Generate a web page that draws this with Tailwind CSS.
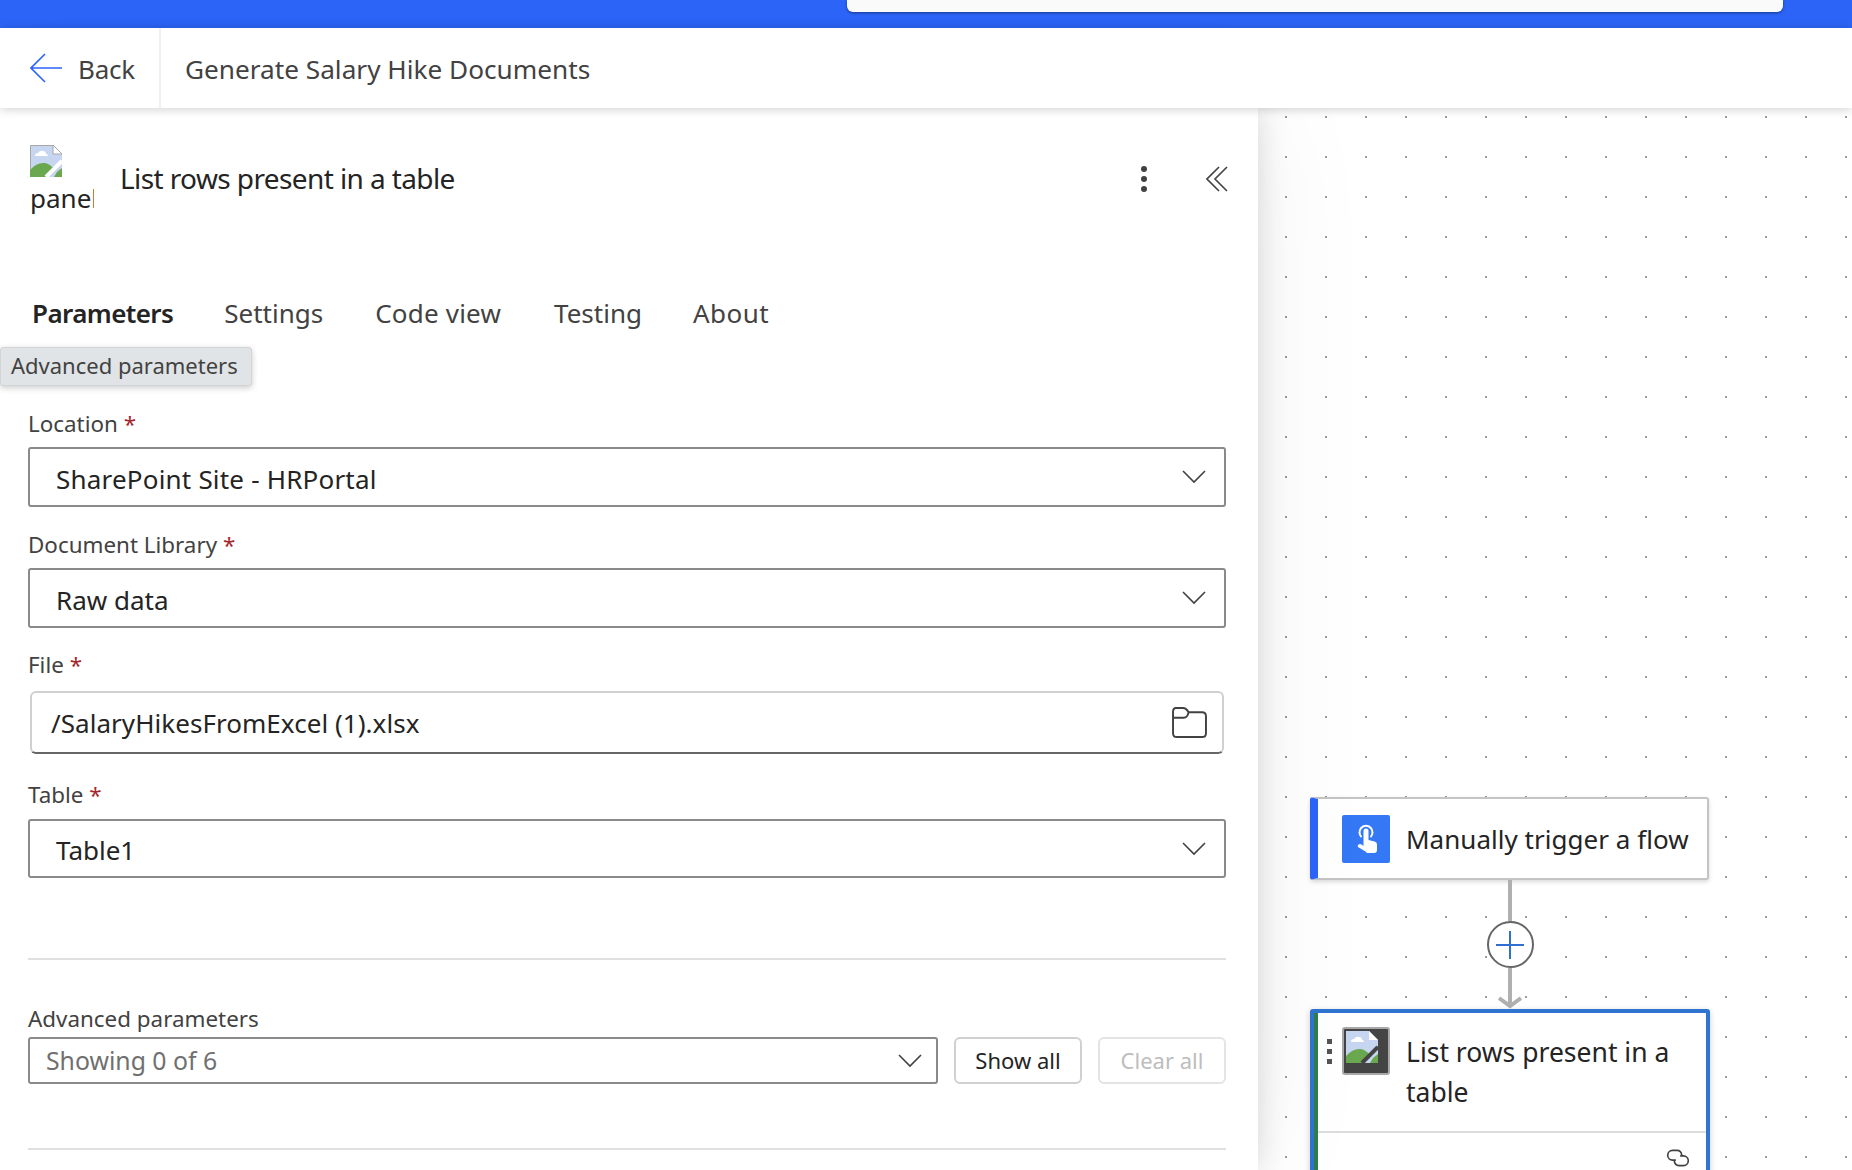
<!doctype html>
<html>
<head>
<meta charset="utf-8">
<script src="https://cdn.jsdelivr.net/npm/@tailwindcss/browser@4"></script>
</head>
<body class="w-[1852px] h-[1170px] overflow-hidden bg-white text-[#242424] font-['Noto_Sans',sans-serif]">
<div class="h-[28px] bg-[#2b64f7] flex shrink-0">
  <div class="ml-[847px] w-[936px] h-[12px] bg-[#fafafa] rounded-b-[6px] shadow-[0_1px_3px_rgba(0,0,0,0.45)]"></div>
</div>
<header class="relative z-20 h-[80px] bg-white flex items-center shadow-[0_1px_10px_rgba(0,0,0,0.2)]">
  <div class="w-[161px] h-full border-r-2 border-[#f0f0f0] flex items-center pl-[30px] gap-[16px]">
    <svg class="w-[32px] h-[30px]" viewBox="0 0 32 30" fill="none" stroke="#2b64f7" stroke-width="1.6"><path d="M32 15H1M15 1 1 15l14 14"/></svg>
    <span class="text-[26px] tracking-[-0.2px] text-[#424242] pt-[3px]">Back</span>
  </div>
  <h1 class="ml-[24px] pt-[2px] text-[26.2px] text-[#424242] leading-none">Generate Salary Hike Documents</h1>
</header>
<main class="flex h-[1062px]">
  <section class="relative z-10 w-[1258px] shrink-0 bg-white shadow-[0_0_30px_rgba(0,0,0,0.14),0_0_120px_rgba(0,0,0,0.06)] pl-[28px] pr-[32px]">
    <div class="flex items-center h-[88px] mt-[27px] -mr-[4px]">
      <div class="w-[64px] h-[74px] overflow-hidden ml-[2px] pt-[3px] shrink-0 text-[26px] leading-none text-[#242424]">
        <svg class="w-[32px] h-[32px] block" viewBox="0 0 32 32"><path d="M0 0h23l9 9v23H0z" fill="#c6d6f0"/><path d="M.5 32V.5H23" fill="none" stroke="#a8a8a8"/><path d="M23 0l9 9h-9z" fill="#fff" stroke="#a8a8a8"/><path d="M5 11q0-3 3-3 2-3 5-2 3 0 3 3 2 0 2 2z" fill="#fff"/><path d="M0 32v-7q7-8 15-7 5 1 9 6l-8 8z" fill="#6aa84f"/><path d="M27 27l5-4v9h-8z" fill="#6aa84f"/><path d="M32 16 16 32" stroke="#fff" stroke-width="4"/></svg>
        <span class="block mt-[8px]">panel</span>
      </div>
      <h2 class="ml-[26px] mb-[3px] text-[28px] tracking-[-0.6px] text-[#242424] leading-none">List rows present in a table</h2>
      <div class="ml-auto flex items-center">
        <svg class="w-[10px] h-[26px] mr-[57px]" viewBox="0 0 10 26" fill="#424242"><circle cx="5" cy="3" r="3"/><circle cx="5" cy="13" r="3"/><circle cx="5" cy="23" r="3"/></svg>
        <svg class="w-[22px] h-[26px] mr-[2px]" viewBox="0 0 22 26" fill="none" stroke="#424242" stroke-width="1.6"><path d="M13 1 1 13l12 12M21 1 9 13l12 12"/></svg>
      </div>
    </div>
    <nav class="flex gap-[51px] mt-[77px] ml-[4px] text-[26px] leading-none text-[#424242]">
      <span class="font-semibold tracking-[-0.6px] text-[#242424]">Parameters</span><span>Settings</span><span class="ml-[1px] tracking-[0.2px]">Code view</span><span class="ml-[2px]">Testing</span><span class="tracking-[0.5px]">About</span>
    </nav>
    <div class="absolute left-0 top-[239px] w-[252px] h-[39px] rounded-[3px] bg-[#e1e4e6] border border-[#d2d4d6] shadow-[0_2px_6px_rgba(0,0,0,0.2)] flex items-center pl-[10px] pb-[3px] text-[22px] leading-none text-[#424242]">Advanced parameters</div>
    <form class="mt-[87px] flex flex-col">
      <label class="text-[22.4px] leading-none text-[#424242] h-[34px]">Location <span class="text-[#a4262c]">*</span></label>
      <div class="h-[60px] border-2 border-[#8a8a8a] rounded-[3px] flex items-center justify-between pl-[26px] pr-[18px] text-[26px] text-[#242424]">
        <span class="pt-[4px] tracking-[0.2px]">SharePoint Site - HRPortal</span>
        <svg class="w-[24px] h-[14px]" viewBox="0 0 24 14" fill="none" stroke="#424242" stroke-width="1.6"><path d="m1 1 11 11L23 1"/></svg>
      </div>
      <label class="mt-[27px] text-[22.4px] leading-none text-[#424242] h-[34px]">Document Library <span class="text-[#a4262c]">*</span></label>
      <div class="h-[60px] border-2 border-[#8a8a8a] rounded-[3px] flex items-center justify-between pl-[26px] pr-[18px] text-[26px] text-[#242424]">
        <span class="pt-[4px]">Raw data</span>
        <svg class="w-[24px] h-[14px]" viewBox="0 0 24 14" fill="none" stroke="#424242" stroke-width="1.6"><path d="m1 1 11 11L23 1"/></svg>
      </div>
      <label class="mt-[26px] text-[22.4px] leading-none text-[#424242] h-[37px]">File <span class="text-[#a4262c]">*</span></label>
      <div class="mx-[2px] h-[63px] border-2 border-[#d0d0d0] border-b-[#666666] rounded-[6px] flex items-center justify-between pl-[19px] pr-[15px] text-[26px] text-[#242424]">
        <span class="pt-[2px] tracking-[0.05px]">/SalaryHikesFromExcel (1).xlsx</span>
        <svg class="w-[35px] h-[31px]" viewBox="0 0 36 32" fill="none" stroke="#424242" stroke-width="2"><path d="M4 1h7q4 0 6 4.500H31q4 0 4 4V27q0 4-4 4H5q-4 0-4-4V5q0-4 3-4zM1 11h11q4 0 5-5.500"/></svg>
      </div>
      <label class="mt-[30px] text-[22.4px] leading-none text-[#424242] h-[35px]">Table <span class="text-[#a4262c]">*</span></label>
      <div class="h-[59px] border-2 border-[#8a8a8a] rounded-[3px] flex items-center justify-between pl-[26px] pr-[18px] text-[26px] text-[#242424]">
        <span class="pt-[4px]">Table1</span>
        <svg class="w-[24px] h-[14px]" viewBox="0 0 24 14" fill="none" stroke="#424242" stroke-width="1.6"><path d="m1 1 11 11L23 1"/></svg>
      </div>
      <hr class="mt-[80px] border-0 h-[2px] bg-[#e0e0e0]">
      <label class="mt-[48px] text-[22.4px] leading-none text-[#424242] h-[29px]">Advanced parameters</label>
      <div class="flex gap-[16px] h-[47px]">
        <div class="w-[910px] border-2 border-[#8a8a8a] rounded-[3px] flex items-center justify-between pl-[16px] pr-[14px] text-[24.8px] text-[#707070]">
          <span>Showing 0 of 6</span>
          <svg class="w-[24px] h-[14px]" viewBox="0 0 24 14" fill="none" stroke="#424242" stroke-width="1.6"><path d="m1 1 11 11L23 1"/></svg>
        </div>
        <div class="w-[128px] border-2 border-[#d0d0d0] rounded-[6px] flex items-center justify-center text-[22px] text-[#242424]">Show all</div>
        <div class="w-[128px] border-2 border-[#e4e4e4] rounded-[6px] flex items-center justify-center text-[22px] text-[#bdbdbd]">Clear all</div>
      </div>
      <hr class="mt-[64px] border-0 h-[2px] bg-[#e0e0e0]">
    </form>
  </section>
  <section class="relative flex-1 bg-white bg-[radial-gradient(circle,#999999_1.2px,transparent_1.4px)] bg-size-[40px_40px] bg-position-[8px_-11px] overflow-hidden">
    <div class="absolute left-[52px] top-[689px] w-[400px] flex flex-col items-center">
      <div class="w-[399px] h-[83px] self-start bg-white rounded-[3px] border-2 border-[#c4c4c4] border-l-[8px] border-l-[#2b64f7] shadow-[0_2px_4px_rgba(0,0,0,0.15)] flex items-center pl-[24px] gap-[16px]">
        <svg class="w-[48px] h-[48px]" viewBox="0 0 48 48"><rect width="48" height="48" rx="2" fill="#3478f6"/><path d="M21.500 16a2.500 2.500 0 0 1 5 0v9l6 1.500q2.500.6 2.500 3V35q0 3-3 3h-6q-1.500 0-2.500-1.500L16 32q-1-1.500.5-2.500t3 0l2 1.500z" fill="#fff"/><path d="M19.500 22a6.500 6.500 0 1 1 9 0" fill="none" stroke="#fff" stroke-width="2"/></svg>
        <span class="text-[26px] pt-[2px] tracking-[0.03px] text-[#242424]">Manually trigger a flow</span>
      </div>
      <div class="w-[4px] h-[41px] bg-[#b0b0b0]"></div>
      <div class="w-[47px] h-[47px] shrink-0 rounded-full border-2 border-[#666666] bg-white flex items-center justify-center">
        <svg class="w-[28px] h-[28px]" viewBox="0 0 28 28" stroke="#2f6fd0" stroke-width="2"><path d="M14 0v28M0 14h28"/></svg>
      </div>
      <svg class="w-[24px] h-[41px] block" viewBox="0 0 24 41" fill="none" stroke="#b0b0b0" stroke-width="4"><path d="M12 0v39M1 30l11 8 11-8"/></svg>
      <div class="w-[400px] h-[200px] shrink-0 bg-white rounded-[3px] border-[4px] border-[#2f74d0] flex shadow-[0_2px_6px_rgba(0,0,0,0.2)]">
        <div class="w-[4px] bg-[#2e7d4a] shrink-0"></div>
        <div class="flex-1 flex flex-col">
          <div class="h-[120px] pt-[14px] pl-[9px] flex items-start border-b-2 border-[#dddddd]">
            <div class="w-[5px] mt-[12px] mr-[10px] flex flex-col gap-[5px]">
              <span class="w-[5px] h-[5px] bg-[#555555]"></span><span class="w-[5px] h-[5px] bg-[#555555]"></span><span class="w-[5px] h-[5px] bg-[#555555]"></span>
            </div>
            <div class="w-[48px] h-[48px] shrink-0 bg-[#444444] border-2 border-[#a8a8a8] rounded-[3px] p-[2px]">
              <svg class="w-[32px] h-[32px] block" viewBox="0 0 32 32"><path d="M0 0h23l9 9v23H0z" fill="#c6d6f0"/><path d="M23 0l9 9h-9z" fill="#fff"/><path d="M5 11q0-3 3-3 2-3 5-2 3 0 3 3 2 0 2 2z" fill="#fff"/><path d="M0 32v-7q7-8 15-7 5 1 9 6l-8 8z" fill="#6aa84f"/><path d="M27 27l5-4v9h-8z" fill="#6aa84f"/><path d="M32 16 16 32" stroke="#444444" stroke-width="4"/></svg>
            </div>
            <span class="ml-[16px] mt-[5px] w-[280px] text-[26.5px] leading-[40px] text-[#242424]">List rows present in a table</span>
          </div>
          <div class="flex justify-end pr-[15px] pt-[16px]">
            <svg class="w-[26px] h-[18px]" viewBox="0 0 24 16" fill="none" stroke="#424242" stroke-width="1.500"><path d="M10 10H7A4.500 4.500 0 0 1 7 1h4q4 0 4.500 4.500"/><path d="M14 6h3a4.500 4.500 0 0 1 0 9h-4q-4 0-4.500-4.500"/></svg>
          </div>
        </div>
      </div>
    </div>
  </section>
</main>
</body>
</html>
